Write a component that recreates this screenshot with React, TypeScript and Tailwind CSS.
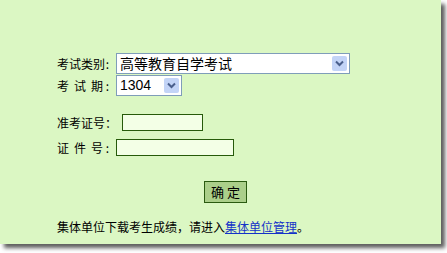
import { ReactNode } from "react";

const FONT = "font-['SimSun','Noto_Sans_CJK_SC',sans-serif]";

function Arrow() {
  return (
    <span className="pointer-events-none absolute right-[2px] top-[2px] flex h-[15px] w-[15px] items-center justify-center rounded-[2px] bg-[#c3d4f7]">
      <svg width="9" height="7" viewBox="0 0 9 7">
        <path d="M1 1.5 L4.5 5 L8 1.5" fill="none" stroke="#4a5f8c" strokeWidth="2" />
      </svg>
    </span>
  );
}

function FakeSelect({ value, width, text }: { value: string; width: string; text: string }) {
  return (
    <div className={`relative h-[21px] ${width} border border-[#7f9db9] bg-white`}>
      <div className={`flex h-full items-center pl-[3px] text-black ${text}`}>{value}</div>
      <Arrow />
    </div>
  );
}

// label chars spread across a fixed width, like the old table layout
function Label({ chars, width }: { chars: string[]; width: string }) {
  return (
    <span className={`flex ${width} justify-between text-[12px] leading-none text-black`}>
      {chars.map((c, i) => (
        <span key={i}>{c}</span>
      ))}
    </span>
  );
}

function Row({ children, className }: { children: ReactNode; className?: string }) {
  return <div className={`flex items-center ${className ?? ""}`}>{children}</div>;
}

export default function App() {
  return (
    <div className={`h-[253px] w-[447px] bg-white ${FONT}`}>
      <div className="h-[244px] w-[441px] bg-[#dbf7c3] shadow-[4px_4px_4px_rgba(40,40,40,0.75)] pl-[57px] pt-[53px]">
        <Row>
          <Label chars={["考试类别", ":"]} width="w-[52px]" />
          <div className="ml-[7px]">
            <FakeSelect value="高等教育自学考试" width="w-[234px]" text="text-[14px] font-['Noto_Sans_CJK_SC',sans-serif]" />
          </div>
        </Row>
        <Row className="mt-[1px]">
          <Label chars={["考", "试", "期 :"]} width="w-[52px]" />
          <div className="ml-[7px]">
            <FakeSelect value="1304" width="w-[66px]" text="text-[14px] font-['Liberation_Sans',sans-serif]" />
          </div>
        </Row>

        <Row className="mt-[18px]">
          <span className="text-[12px] leading-none text-black">准考证号：</span>
          <input className="ml-[5px] h-[17px] w-[81px] border border-[#265a0a] bg-[#f3ffe6] outline-none" />
        </Row>
        <Row className="mt-[8px]">
          <Label chars={["证", "件", "号 :"]} width="w-[52px]" />
          <input className="ml-[7px] h-[17px] w-[118px] border border-[#265a0a] bg-[#f3ffe6] outline-none" />
        </Row>

        <div className="mt-[25px] pl-[147px]">
          <button
            type="button"
            className="flex h-[22px] w-[43px] items-center justify-center border border-[#2a5a10] bg-[#abcf8a] text-[13px] text-black"
          >
            确 定
          </button>
        </div>

        <p className="mt-[18px] text-[12px] leading-none text-black">
          集体单位下载考生成绩，请进入
          <a href="#" className="text-[#1432c8] underline">
            集体单位管理
          </a>
          。
        </p>
      </div>
    </div>
  );
}
